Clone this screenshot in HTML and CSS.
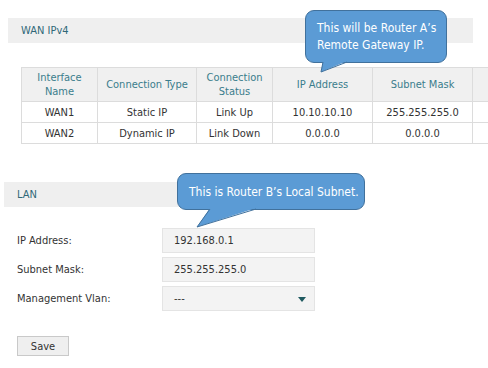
FILE: index.html
```html
<!DOCTYPE html>
<html lang="en">

<head>
    <meta charset="UTF-8">
    <title>WAN / LAN</title>
    <link rel="stylesheet" href="styles.css">
</head>

<body>
    <div class="page">
        <div class="bar wan-bar">WAN IPv4</div>

        <div class="table-wrap">
            <table class="wan-table">
                <tr>
                    <th class="c1">Interface<br>Name</th>
                    <th class="c2">Connection Type</th>
                    <th class="c3">Connection<br>Status</th>
                    <th class="c4">IP Address</th>
                    <th class="c5">Subnet Mask</th>
                    <th class="c6"></th>
                </tr>
                <tr>
                    <td>WAN1</td>
                    <td>Static IP</td>
                    <td>Link Up</td>
                    <td>10.10.10.10</td>
                    <td>255.255.255.0</td>
                    <td></td>
                </tr>
                <tr>
                    <td>WAN2</td>
                    <td>Dynamic IP</td>
                    <td>Link Down</td>
                    <td>0.0.0.0</td>
                    <td>0.0.0.0</td>
                    <td></td>
                </tr>
            </table>
        </div>

        <div class="bar lan-bar">LAN</div>

        <div class="form">
            <div class="row">
                <label>IP Address:</label>
                <div class="field">192.168.0.1</div>
            </div>
            <div class="row">
                <label>Subnet Mask:</label>
                <div class="field">255.255.255.0</div>
            </div>
            <div class="row">
                <label>Management Vlan:</label>
                <div class="field select">---<span class="arrow"></span></div>
            </div>
        </div>

        <button class="save">Save</button>

        <!-- callouts -->
        <div class="callout callout-a">
            This will be Router A’s<br>Remote Gateway IP.
            <svg class="tail" width="60" height="14" viewBox="0 0 60 14">
                <polygon points="18,0 42,0 16,11" fill="#5b9bd5" />
                <polyline points="18,1 16,11 42,1" fill="none" stroke="#41719c" stroke-width="1" />
            </svg>
        </div>
        <div class="callout callout-b">
            This is Router B’s Local Subnet.
            <svg class="tail" width="90" height="22" viewBox="0 0 90 22">
                <polygon points="33,0 79,0 20,19" fill="#5b9bd5" />
                <polyline points="33,1 20,19 79,1" fill="none" stroke="#41719c" stroke-width="1" />
            </svg>
        </div>
    </div>
</body>

</html>
```

FILE: styles.css
```css
body {
    margin: 0;
    padding: 0;
    font-family: 'DejaVu Sans Condensed', 'DejaVu Sans', sans-serif;
    font-size: 11px;
    color: #333;
    background: #fff;
    overflow: hidden;
}

.page {
    position: relative;
    width: 488px;
    height: 368px;
    padding-top: 18px;
    box-sizing: border-box;
}

.bar {
    height: 25px;
    line-height: 25px;
    background-color: #efefef;
    color: #2f6878;
    padding-left: 13px;
    box-sizing: border-box;
}

.wan-bar {
    margin-left: 8px;
    width: 465px;
}

.lan-bar {
    margin-left: 4px;
    width: 320px;
    margin-top: 38px;
}

.table-wrap {
    margin-top: 24px;
    margin-left: 21px;
    overflow: hidden;
    width: 467px;
}

.wan-table {
    border-collapse: collapse;
    table-layout: fixed;
    width: 560px;
}

.wan-table th,
.wan-table td {
    border: 1px solid #dcdcdc;
    text-align: center;
    padding: 0;
    white-space: nowrap;
}

.wan-table th {
    background-color: #f0f0f0;
    color: #3a7d8c;
    font-weight: normal;
    height: 33px;
    line-height: 14px;
}

.wan-table td {
    height: 20px;
}

.c1 { width: 75px; }
.c2 { width: 98px; }
.c3 { width: 75px; }
.c4 { width: 99px; }
.c5 { width: 99px; }
.c6 { width: 114px; }

.form {
    margin-top: 21px;
    display: flex;
    flex-direction: column;
    gap: 4px;
}

.row {
    display: flex;
    align-items: center;
    padding-left: 17px;
}

.row label {
    width: 145px;
}

.field {
    position: relative;
    width: 153px;
    height: 25px;
    line-height: 23px;
    box-sizing: border-box;
    border: 1px solid #e4e4e4;
    background-color: #f3f3f3;
    padding-left: 11px;
}

.arrow {
    position: absolute;
    right: 8px;
    top: 10px;
    width: 0;
    height: 0;
    border-left: 4px solid transparent;
    border-right: 4px solid transparent;
    border-top: 5px solid #1f5a60;
}

.save {
    display: block;
    margin: 25px 0 0 17px;
    width: 52px;
    height: 20px;
    padding: 0;
    font-family: inherit;
    font-size: 11px;
    color: #333;
    background-color: #efefef;
    border: 1px solid #c9c9c9;
}

.callout {
    position: absolute;
    box-sizing: border-box;
    background-color: #5b9bd5;
    border: 1px solid #41719c;
    border-radius: 9px;
    color: #fff;
    font-size: 12px;
    line-height: 17px;
}

.callout .tail {
    position: absolute;
    left: -1px;
    top: 100%;
    margin-top: -1px;
    overflow: visible;
}

.callout-a {
    left: 305px;
    top: 10px;
    width: 142px;
    height: 53px;
    padding: 9px 0 0 11px;
}

.callout-b {
    left: 177px;
    top: 173px;
    width: 188px;
    height: 37px;
    padding: 10px 0 0 11px;
}
```
